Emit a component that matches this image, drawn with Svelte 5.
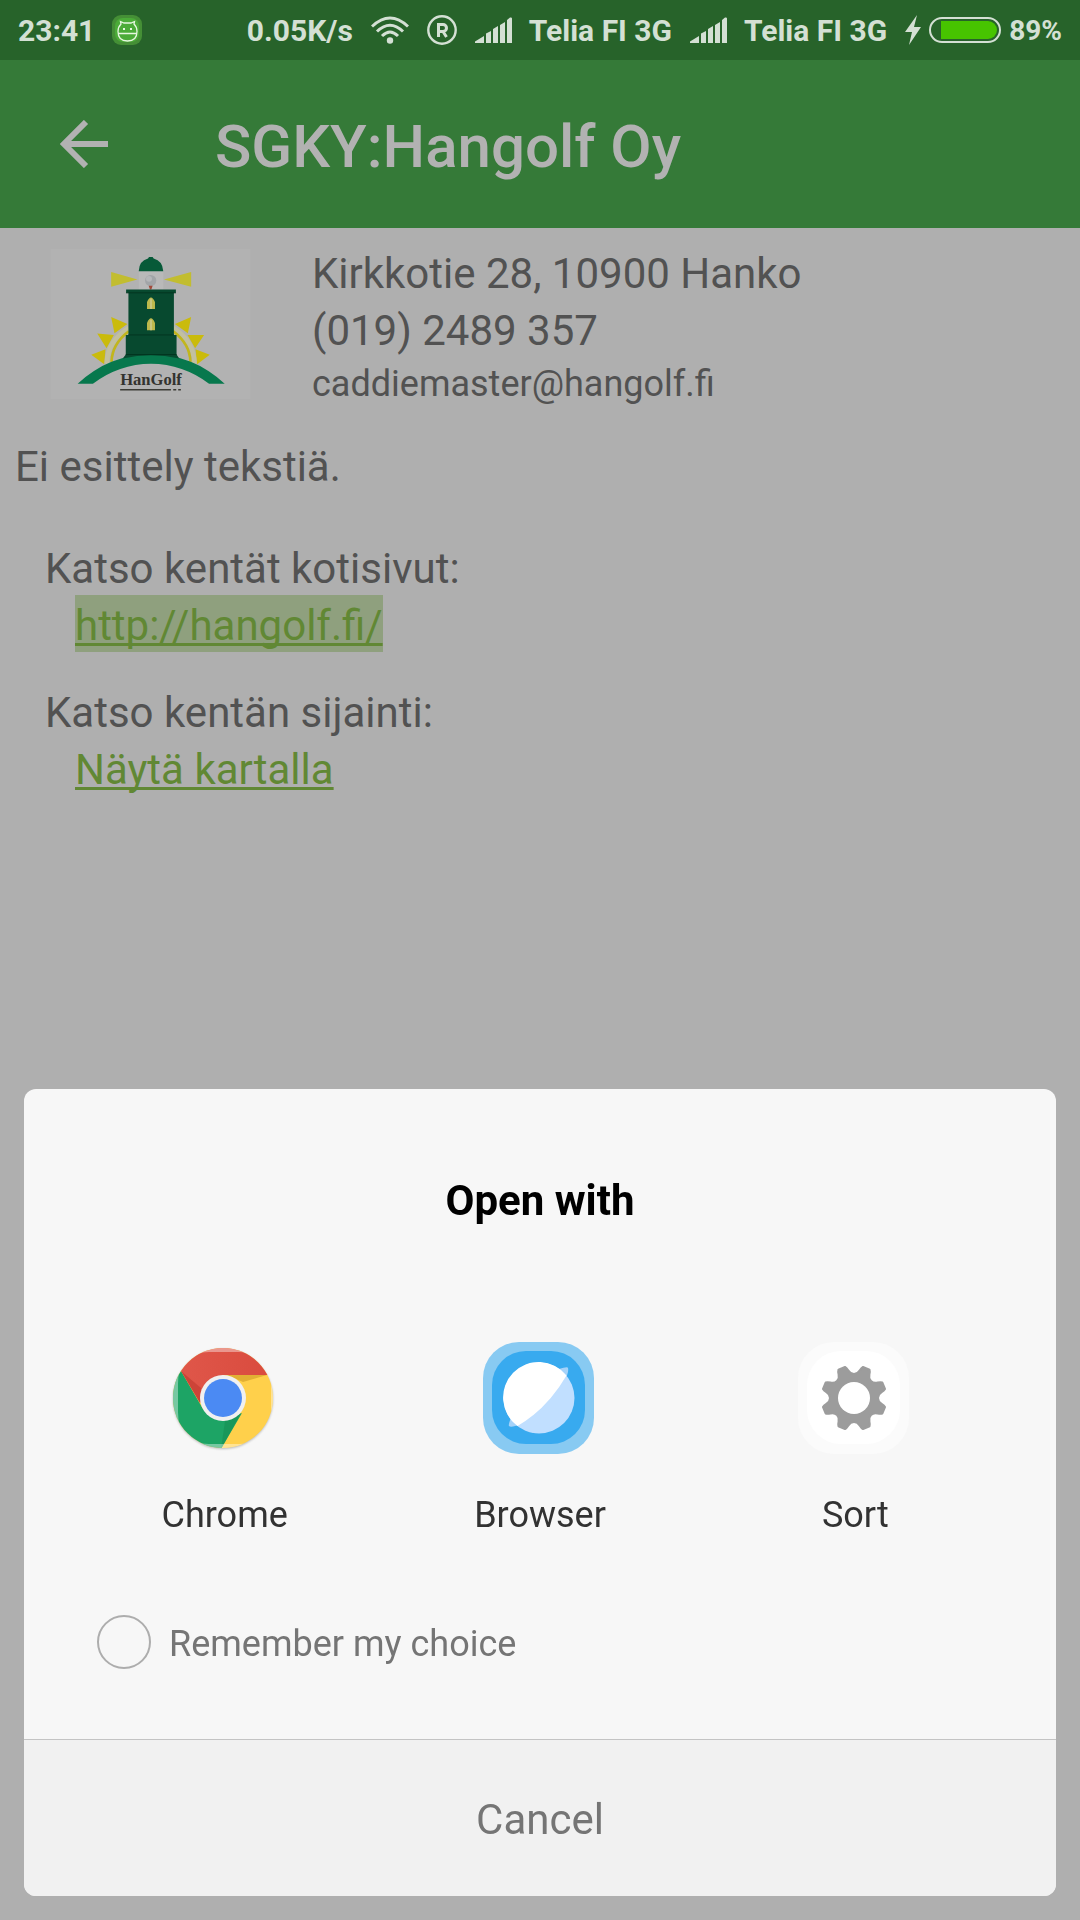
<script>
  let remember = $state(false);

  const networks = ['Telia FI 3G', 'Telia FI 3G'];

  // Outline of an eight-toothed gear centred on the origin.
  function gearPath() {
    const notch = [[-9, -31], [-5, -29], [-6, -24], [0, -24], [6, -24], [5, -29], [9, -31]];
    let d = '';
    for (let k = 0; k < 8; k++) {
      const a = (k * Math.PI) / 4;
      const p = notch.map(([x, y]) =>
        `${(x * Math.cos(a) - y * Math.sin(a)).toFixed(2)} ${(x * Math.sin(a) + y * Math.cos(a)).toFixed(2)}`
      );
      d += `${k ? 'L' : 'M'}${p[0]}C${p[1]} ${p[2]} ${p[3]}C${p[4]} ${p[5]} ${p[6]}`;
    }
    return d + 'Z';
  }
  const gear = gearPath();
</script>

{#snippet chromeIcon()}
  <svg class="app-icon" viewBox="0 0 114 112" aria-hidden="true">
    <defs>
      <clipPath id="disc"><circle cx="55" cy="56" r="50" /></clipPath>
      <filter id="soft" x="-10%" y="-10%" width="120%" height="125%"><feGaussianBlur stdDeviation="1" /></filter>
      <linearGradient id="red" x1="0" x2="1"><stop offset="0" stop-color="#e0584b" /><stop offset="1" stop-color="#d94a3d" /></linearGradient>
    </defs>
    <circle cx="55" cy="57" r="50" fill="#bbb" filter="url(#soft)" />
    <g clip-path="url(#disc)">
      <rect width="112" height="112" fill="#ffd04b" />
      <path d="M0 5 13 29 35 67 55 79 74 71 53 107 49 112H0Z" fill="#1da465" />
      <path d="M57 79 73 71 53 107Z" fill="#168f54" opacity=".6" />
      <path d="M0 0H112V33H55L32 61 13 29 0 5Z" fill="url(#red)" />
      <path d="M13 29 33 46 32 61Z" fill="#c0392f" opacity=".6" />
      <path d="M59 33H99L75 40Z" fill="#dba82d" opacity=".8" />
      <path d="M0 0H112V112H0ZM41 10Q10 10 10 42V70Q10 102 41 102H71Q103 102 103 70V42Q103 10 71 10Z" fill="#fff" fill-rule="evenodd" opacity=".4" />
    </g>
    <circle cx="55" cy="56" r="23" fill="#f0f0f0" />
    <circle cx="55" cy="56" r="19" fill="#4b8af3" />
  </svg>
{/snippet}

{#snippet browserIcon()}
  <svg class="app-icon" viewBox="0 0 114 112" aria-hidden="true">
    <rect width="111" height="112" rx="36" fill="#88caf2" />
    <rect x="9" y="9" width="93" height="93" rx="34" fill="#38aaef" />
    <path d="M76 27Q85 24 85 26 86 30 82 38ZM29 73Q25 83 26 84 28 86 38 82Z" fill="#a5d2f9" />
    <circle cx="56" cy="56" r="35.5" fill="#c1dfff" />
    <path d="M83.500 33.500A35.500 35.500 0 1 0 34.500 84Q64 67 83.500 33.500Z" fill="#fff" />
  </svg>
{/snippet}

{#snippet sortIcon()}
  <svg class="app-icon" viewBox="0 0 114 112" aria-hidden="true">
    <rect width="111" height="112" rx="36" fill="#fbfbfb" />
    <rect x="9" y="9" width="93" height="93" rx="34" fill="#fff" />
    <g transform="translate(56 56)">
      <path d={gear} fill="#9c9c9c" stroke="#9c9c9c" stroke-width="2" stroke-linejoin="round" />
      <circle r="16" fill="#fff" />
    </g>
  </svg>
{/snippet}

<div class="screen">
  <div class="status">
    <span>23:41</span>
    <svg class="robot" viewBox="0 0 30 30" aria-hidden="true">
      <rect width="30" height="30" rx="9" fill="#458f36" />
      <rect x="3" y="3" width="24" height="24" rx="8" fill="#4bab38" />
      <path d="M8.500 6.500 9 9Q6 12 6 16.500 6 26 15.500 26T25 16.500Q25 12 22 9L22.500 6.500 19 8H12ZM6 18.500H25" fill="none" stroke="#e6f6df" stroke-width="1.300" />
      <path d="M11 13h2v2h-2zM18 13h2v2h-2z" fill="#e6f6df" />
    </svg>
    <span class="rate">0.05K/s</span>
    <svg class="wifi" viewBox="0 0 38 28" aria-hidden="true">
      <g fill="none" stroke="currentColor" stroke-width="3">
        <path d="M1 10.500Q19-6.500 37 10.500" />
        <path d="M6 15.500Q19 3 32 15.500" />
        <path d="M11 20Q19 12 27 20" />
      </g>
      <circle cx="19" cy="24.500" r="3.200" fill="currentColor" />
    </svg>
    <svg class="roaming" viewBox="0 0 30 30" aria-hidden="true">
      <g fill="none" stroke="currentColor">
        <circle cx="15" cy="15" r="13.700" stroke-width="2.400" />
        <path d="M11.500 22V9.500H16a3.400 3.400 0 0 1 0 7H11.500M16 16.500 19.500 22" stroke-width="3" />
      </g>
    </svg>
    {#each networks as name}
      <svg class="signal" viewBox="0 0 38 26" aria-hidden="true">
        <path d="M0 26V24.500L9 19V26ZM11 26V16.500L16 14V26ZM18 26V12L23 9V26ZM25 26V8L30 5V26ZM32 26V3L35 .5Q37 0 37 1.500V26Z" fill="currentColor" />
      </svg>
      <span class="network">{name}</span>
    {/each}
    <svg class="bolt" viewBox="0 0 16 30" aria-hidden="true">
      <path d="M12 0 0 17H7L4 30 16 12H9Z" fill="currentColor" />
    </svg>
    <svg class="battery" viewBox="0 0 72 26" aria-hidden="true">
      <rect x="1" y="1" width="70" height="24" rx="12" fill="none" stroke="currentColor" stroke-width="2" />
      <path d="M12 4H59a9 9 0 0 1 0 18H12Z" fill="#47c400" />
    </svg>
    <span class="percent">89%</span>
  </div>

  <header>
    <button class="back" aria-label="Back">
      <svg viewBox="0 0 48 48" aria-hidden="true">
        <path d="M26 2 4 24 26 46M4 24H48" fill="none" stroke="currentColor" stroke-width="6" />
      </svg>
    </button>
    <h1>SGKY:Hangolf Oy</h1>
  </header>

  <main>
    <section class="info">
      <svg class="logo" viewBox="0 0 603 452" role="img" aria-label="HanGolf">
        <rect width="603" height="452" fill="#b2b2b2" />
        <g fill="#cabb0c">
          <path d="M183 205 232 226 193 254ZM141 255 191 259 169 299ZM123 319 166 302 162 347Z" />
          <path d="M424 205 375 226 414 254ZM463 259 413 259 436 299ZM480 319 437 302 442 347Z" />
        </g>
        <g fill="none">
          <path d="M170 345Q172 276 236 238M434 345Q432 276 370 238" stroke="#c2c0a0" stroke-width="14" />
          <path d="M184 340Q186 286 236 248M422 340Q420 286 370 248" stroke="#c2b61c" stroke-width="8" />
        </g>
        <path d="M183 69V114L262 92ZM424 69V114L342 92Z" fill="#c2bd30" />
        <rect x="266" y="66" width="74" height="56" fill="#b9b9b9" />
        <path d="M266 67Q267 36 294 29L297 24H308L311 29Q338 36 340 67Z" fill="#075a38" />
        <circle cx="302" cy="95" r="17" fill="#a2a5a8" />
        <circle cx="297" cy="90" r="9" fill="#b5b7b9" />
        <path d="M296 111H308L304 122H300Z" fill="#a24b3b" />
        <path d="M82 406A320 320 0 0 1 525 406H478A285 285 0 0 0 128 406Z" fill="#07784d" />
        <path d="M228 122H378V132H372V259H380V318L388 330Q303 310 218 330L227 318V259H235V132H228Z" fill="#07492f" />
        <path d="M228 132H378M235 259H372M227 318H380" stroke="#033520" stroke-width="3" />
        <path d="M291 181V160Q303 132 315 160V181ZM291 245V223Q303 195 315 223V245Z" fill="#bdb84c" />
        <path d="M303 150V181M303 213V245" stroke="#cbc88a" stroke-width="5" />
        <text x="210" y="411" font-size="50">HanGolf</text>
        <path d="M210 424H363M370 424H379M385 424H393" stroke="#3c3c36" stroke-width="5" />
      </svg>
      <address>
        <p>Kirkkotie 28, 10900 Hanko</p>
        <p>(019) 2489 357</p>
        <p class="email">caddiemaster@hangolf.fi</p>
      </address>
    </section>

    <p class="intro">Ei esittely tekstiä.</p>

    <section class="links">
      <div>
        <p>Katso kentät kotisivut:</p>
        <a class="pressed" href="http://hangolf.fi/">http://hangolf.fi/</a>
      </div>
      <div>
        <p>Katso kentän sijainti:</p>
        <a href="#map">Näytä kartalla</a>
      </div>
    </section>
  </main>

  <div class="sheet" role="dialog" aria-labelledby="sheet-title">
    <h2 id="sheet-title">Open with</h2>
    <div class="apps">
      <button>{@render chromeIcon()}<span>Chrome</span></button>
      <button>{@render browserIcon()}<span>Browser</span></button>
      <button>{@render sortIcon()}<span>Sort</span></button>
    </div>
    <label class="remember">
      <input type="checkbox" bind:checked={remember} />
      <span>Remember my choice</span>
    </label>
    <button class="cancel">Cancel</button>
  </div>
</div>

<style>
  :global(body) {
    margin: 0;
    background: #afafaf;
  }

  .screen {
    min-height: 100vh;
    background: #afafaf;
    color: #525252;
    font-family: Roboto, sans-serif;
    font-size: 42px;
  }

  h1, h2, p {
    margin: 0;
  }

  button {
    margin: 0;
    padding: 0;
    border: 0;
    background: none;
    color: inherit;
    font: inherit;
  }

  svg {
    display: block;
    flex: none;
  }

  .status {
    display: flex;
    align-items: center;
    height: 60px;
    padding: 0 18px;
    background: #27632a;
    color: #d4e0d4;
    font-size: 30px;
    font-weight: 700;
    line-height: 36px;
    white-space: nowrap;
  }

  .status span {
    padding-top: 2px;
  }

  .robot {
    width: 30px;
    height: 30px;
    margin-left: 17px;
  }

  .status .rate {
    margin-left: auto;
  }

  .status .percent {
    font-size: 28px;
  }

  .wifi {
    width: 38px;
    height: 28px;
    margin-left: 18px;
  }

  .roaming {
    width: 30px;
    height: 30px;
    margin-left: 18px;
  }

  .signal {
    width: 38px;
    height: 26px;
    margin-left: 18px;
  }

  .network {
    margin-left: 16px;
  }

  .bolt {
    width: 16px;
    height: 30px;
    margin-left: 18px;
  }

  .battery {
    width: 72px;
    height: 26px;
    margin: 0 8px;
  }

  header {
    display: flex;
    align-items: center;
    gap: 107px;
    height: 168px;
    padding: 0 60px;
    background: #357a38;
    color: #b2b2b2;
  }

  .back svg {
    width: 48px;
    height: 48px;
  }

  h1 {
    padding-top: 5px;
    font-size: 60px;
    font-weight: 500;
    line-height: 72px;
  }

  main {
    padding: 17px 15px 0;
  }

  .info {
    display: flex;
    gap: 61px;
    padding-left: 35px;
  }

  .logo {
    width: 201px;
    height: 150px;
    margin-top: 4px;
  }

  .logo text {
    fill: #33332f;
    font-family: "Liberation Serif", serif;
    font-weight: 700;
  }

  address {
    font-style: normal;
    line-height: 57px;
  }

  .email {
    font-size: 36px;
    line-height: 50px;
  }

  .intro {
    margin-top: 29px;
    line-height: 57px;
  }

  .links {
    display: grid;
    gap: 34px;
    margin-top: 47px;
    padding-left: 30px;
    line-height: 53px;
  }

  .links a {
    display: block;
    width: fit-content;
    margin-left: 30px;
    padding-top: 4px;
    color: #618834;
    text-decoration: underline;
    text-decoration-thickness: 3px;
    text-underline-offset: 3px;
    text-decoration-skip-ink: none;
  }

  .links .pressed {
    background: #8fa07e;
  }

  .sheet {
    position: fixed;
    right: 24px;
    bottom: 24px;
    left: 24px;
    overflow: hidden;
    border-radius: 12px;
    background: #f7f7f7;
  }

  h2 {
    padding-top: 87px;
    color: #000;
    font-size: 42px;
    font-weight: 700;
    line-height: 50px;
    text-align: center;
  }

  .apps {
    display: grid;
    grid-template-columns: repeat(3, 1fr);
    margin-top: 116px;
    padding: 0 43px;
    color: #323232;
    font-size: 36px;
    line-height: 42px;
  }

  .apps button {
    display: flex;
    flex-direction: column;
    align-items: center;
    gap: 40px;
  }

  .app-icon {
    width: 114px;
    height: 112px;
  }

  .remember {
    display: flex;
    align-items: center;
    gap: 18px;
    width: fit-content;
    margin: 79px 73px 70px;
    color: #757575;
    font-size: 36px;
    line-height: 42px;
  }

  .remember span {
    padding-top: 3px;
  }

  .remember input {
    appearance: none;
    width: 54px;
    height: 54px;
    margin: 0;
    border: 2px solid #adadad;
    border-radius: 50%;
  }

  .remember input:checked {
    background: #357a38;
  }

  .cancel {
    display: block;
    width: 100%;
    padding: 55px 0 51px;
    border-top: 1px solid #c4c4c4;
    background: #f1f1f1;
    color: #757575;
    line-height: 50px;
  }
</style>
